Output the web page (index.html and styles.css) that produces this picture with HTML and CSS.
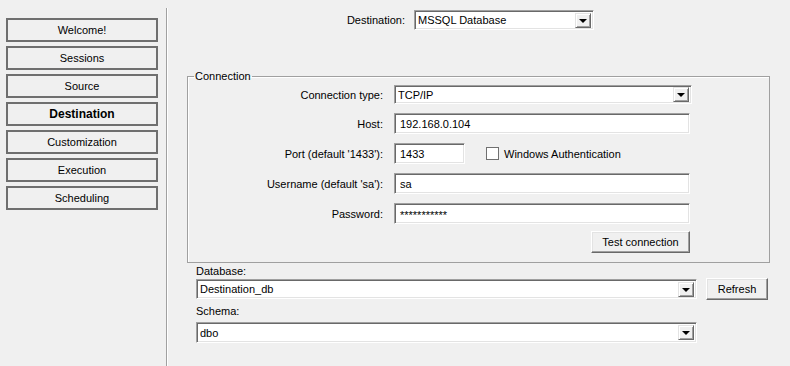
FILE: index.html
```html
<!DOCTYPE html>
<html lang="en">
  <head>
    <meta charset="UTF-8" />
    <title>Destination</title>
    <link rel="stylesheet" href="styles.css">
  </head>
  <body>
    <!-- Wizard steps -->
    <div class="sidebar">
      <div class="nav-btn">Welcome!</div>
      <div class="nav-btn">Sessions</div>
      <div class="nav-btn">Source</div>
      <div class="nav-btn active">Destination</div>
      <div class="nav-btn">Customization</div>
      <div class="nav-btn">Execution</div>
      <div class="nav-btn">Scheduling</div>
    </div>

    <div class="main">
      <div class="dest-row">
        <span class="dest-label">Destination:</span>
        <div class="combo dest-combo">
          <span class="combo-text">MSSQL Database</span>
          <span class="combo-arrow"></span>
        </div>
      </div>

      <fieldset class="conn">
        <legend>Connection</legend>
        <div class="conn-grid">
          <label>Connection type:</label>
          <div class="combo type-combo">
            <span class="combo-text">TCP/IP</span>
            <span class="combo-arrow"></span>
          </div>

          <label>Host:</label>
          <input class="field wide" type="text" value="192.168.0.104" />

          <label>Port (default '1433'):</label>
          <div class="port-row">
            <input class="field port" type="text" value="1433" />
            <span class="check"></span>
            <span>Windows Authentication</span>
          </div>

          <label>Username (default 'sa'):</label>
          <input class="field wide" type="text" value="sa" />

          <label>Password:</label>
          <div class="field wide pass">***********</div>

          <span></span>
          <div class="btn test-btn">Test connection</div>
        </div>
      </fieldset>

      <div class="db-area">
        <div class="db-label">Database:</div>
        <div class="db-row">
          <div class="combo db-combo">
            <span class="combo-text">Destination_db</span>
            <span class="combo-arrow"></span>
          </div>
          <div class="btn refresh-btn">Refresh</div>
        </div>
        <div class="db-label schema-label">Schema:</div>
        <div class="combo db-combo schema-combo">
          <span class="combo-text">dbo</span>
          <span class="combo-arrow"></span>
        </div>
      </div>
    </div>
  </body>
</html>
```

FILE: styles.css
```css
body {
  margin: 0;
  background-color: #f0f0f0;
  font-family: "Liberation Sans", Arial, sans-serif;
  font-size: 11px;
  color: #000000;
  display: flex;
  height: 366px;
  overflow: hidden;
}
.sidebar {
  width: 160px;
  padding: 18px 0 0 6px;
  display: flex;
  flex-direction: column;
  gap: 4px;
}
.nav-btn {
  width: 152px;
  height: 24px;
  box-sizing: border-box;
  border: 2px solid #6f6f6f;
  display: flex;
  align-items: center;
  justify-content: center;
}
.nav-btn.active {
  font-weight: bold;
  font-size: 12px;
}
.main {
  flex: 1;
  margin-top: 8px;
  border-left: 1px solid #a0a0a0;
  box-shadow: inset 1px 0 0 #ffffff;
}
.dest-row {
  display: flex;
  align-items: center;
  margin-top: 2px;
  padding-left: 150px;
}
.dest-label {
  width: 88px;
  text-align: right;
  margin-right: 9px;
}

/* sunken controls */
.combo,
.field {
  box-sizing: border-box;
  background-color: #ffffff;
  border: 1px solid;
  border-color: #a0a0a0 #ffffff #ffffff #a0a0a0;
  box-shadow: inset 1px 1px 0 #696969, inset -1px -1px 0 #e3e3e3;
  font-family: inherit;
  font-size: 11px;
}
.combo {
  display: flex;
  align-items: center;
  padding: 0 2px 0 3px;
}
.combo-text {
  flex: 1;
}
.combo-arrow {
  width: 16px;
  height: 15px;
  box-sizing: border-box;
  background-color: #f0f0f0;
  border: 1px solid;
  border-color: #e3e3e3 #696969 #696969 #e3e3e3;
  box-shadow: inset 1px 1px 0 #ffffff, inset -1px -1px 0 #a0a0a0;
  position: relative;
}
.combo-arrow::after {
  content: "";
  position: absolute;
  left: 3px;
  top: 5px;
  border-left: 4px solid transparent;
  border-right: 4px solid transparent;
  border-top: 4px solid #000000;
}
.dest-combo {
  width: 180px;
  height: 20px;
}
.field {
  height: 21px;
  padding: 0 5px;
  outline: none;
}
.pass {
  display: flex;
  align-items: center;
  padding-top: 2px;
}

/* connection group */
.conn {
  margin: 40px 0 0 20px;
  width: 583px;
  box-sizing: border-box;
  padding: 0 0 9px 0;
  border: 1px solid #a0a0a0;
  box-shadow: inset 1px 1px 0 #ffffff;
}
.conn legend {
  padding: 0 1px;
  margin-left: 6px;
}
.conn-grid {
  display: grid;
  grid-template-columns: 195px 1fr;
  column-gap: 11px;
  row-gap: 9px;
  align-items: center;
  margin-top: 3px;
}
.conn-grid label {
  text-align: right;
}
.type-combo {
  width: 298px;
  height: 19px;
}
.wide {
  width: 296px;
}
.port-row {
  display: flex;
  align-items: center;
}
.port {
  width: 71px;
}
.check {
  width: 13px;
  height: 13px;
  box-sizing: border-box;
  background-color: #ffffff;
  border: 1px solid #707070;
  margin: 0 5px 0 21px;
}

/* raised buttons */
.btn {
  box-sizing: border-box;
  height: 22px;
  display: flex;
  align-items: center;
  justify-content: center;
  background-color: #f0f0f0;
  border: 1px solid;
  border-color: #ffffff #696969 #696969 #ffffff;
  box-shadow: inset -1px -1px 0 #a0a0a0, inset 1px 1px 0 #e3e3e3;
}
.test-btn {
  width: 99px;
  margin: -2px 0 0 197px;
}

/* database area */
.db-area {
  padding: 1px 0 0 29px;
}
.db-label {
  height: 14px;
  line-height: 14px;
}
.db-row {
  display: flex;
  align-items: center;
  gap: 9px;
}
.db-combo {
  width: 501px;
  height: 20px;
}
.refresh-btn {
  width: 62px;
}
.schema-label {
  margin: 4px 0 4px;
}
.schema-combo {
  height: 21px;
}
```
